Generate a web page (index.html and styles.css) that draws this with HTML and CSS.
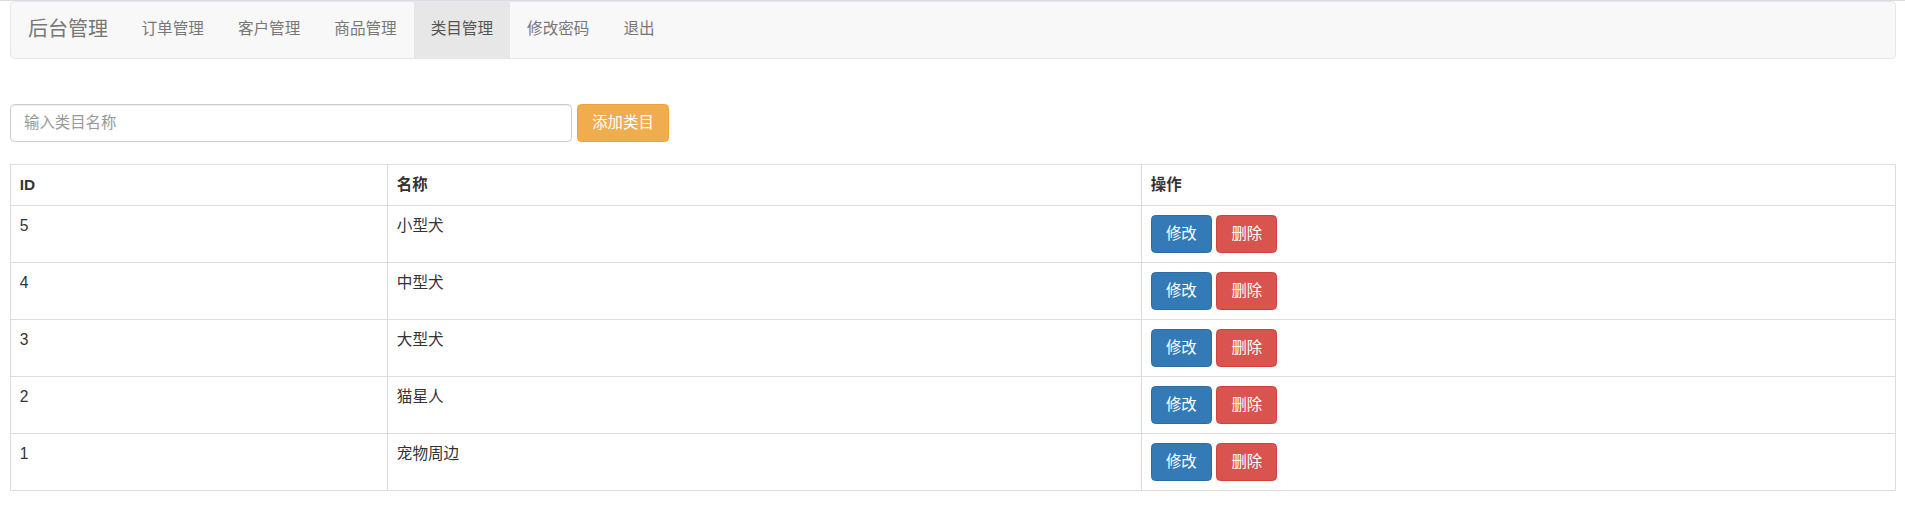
FILE: index.html
```html
<!DOCTYPE html>
<html lang="zh-CN">
<head>
<meta charset="utf-8">
<title>类目管理</title>
<link rel="stylesheet" href="styles.css">
</head>
<body>
<div class="page">
  <nav class="navbar">
    <a class="brand" href="#">后台管理</a>
    <ul class="nav">
      <li><a href="#">订单管理</a></li>
      <li><a href="#">客户管理</a></li>
      <li><a href="#">商品管理</a></li>
      <li class="active"><a href="#">类目管理</a></li>
      <li><a href="#">修改密码</a></li>
      <li><a href="#">退出</a></li>
    </ul>
  </nav>

  <form class="add-form">
    <input class="form-control" type="text" placeholder="输入类目名称">
    <button class="btn btn-warning" type="button">添加类目</button>
  </form>

  <table class="table">
    <thead>
      <tr><th class="c-id">ID</th><th class="c-name">名称</th><th class="c-op">操作</th></tr>
    </thead>
    <tbody>
      <tr><td>5</td><td>小型犬</td><td><div class="ops"><button class="btn btn-primary">修改</button><button class="btn btn-danger">删除</button></div></td></tr>
      <tr><td>4</td><td>中型犬</td><td><div class="ops"><button class="btn btn-primary">修改</button><button class="btn btn-danger">删除</button></div></td></tr>
      <tr><td>3</td><td>大型犬</td><td><div class="ops"><button class="btn btn-primary">修改</button><button class="btn btn-danger">删除</button></div></td></tr>
      <tr><td>2</td><td>猫星人</td><td><div class="ops"><button class="btn btn-primary">修改</button><button class="btn btn-danger">删除</button></div></td></tr>
      <tr><td>1</td><td>宠物周边</td><td><div class="ops"><button class="btn btn-primary">修改</button><button class="btn btn-danger">删除</button></div></td></tr>
    </tbody>
  </table>
</div>
</body>
</html>
```

FILE: styles.css
```css
* { box-sizing: border-box; }
html, body { margin: 0; padding: 0; background: #fff; }
body {
  font-family: "Liberation Sans", Arial, "Noto Sans CJK SC", sans-serif;
  font-size: 15.4px;
  line-height: 22px;
  color: #333;
  border-top: 1px solid #d9dce3;
}
.page { padding: 0 9px 0 10px; }

.navbar {
  display: flex;
  align-items: stretch;
  height: 58px;
  background: #f8f8f8;
  border: 1px solid #e7e7e7;
  border-radius: 4.4px;
  margin-bottom: 45px;
}
.brand {
  display: flex;
  align-items: center;
  padding: 0 16.5px 2px 17px;
  font-size: 20px;
  color: #777;
  text-decoration: none;
}
.nav {
  display: flex;
  list-style: none;
  margin: 0;
  padding: 0;
}
.nav li { display: flex; }
.nav a {
  display: flex;
  align-items: center;
  padding: 0 17px 2px;
  color: #777;
  text-decoration: none;
  font-size: 15.6px;
}
.nav .active a { background: #e7e7e7; color: #555; }

.add-form {
  display: flex;
  align-items: center;
  gap: 5px;
  margin: 0 0 22px;
}
.form-control {
  width: 562px;
  height: 38px;
  padding: 6px 13px;
  font-family: inherit;
  font-size: 15.4px;
  color: #555;
  border: 1px solid #ccc;
  border-radius: 4.4px;
  box-shadow: inset 0 1px 1px rgba(0,0,0,.075);
  outline: none;
}
.form-control::placeholder { color: #999; }

.btn {
  display: inline-block;
  height: 38px;
  padding: 0 13.2px;
  font-family: inherit;
  font-size: 15.4px;
  line-height: 22px;
  color: #fff;
  border: 1px solid transparent;
  border-radius: 4.4px;
  cursor: pointer;
}
.btn-warning { background: #f0ad4e; border-color: #eea236; width: 92px; }
.btn-primary { background: #337ab7; border-color: #2e6da4; width: 61px; padding: 0; }
.btn-danger { background: #d9534f; border-color: #d43f3a; width: 61px; padding: 0; }

.table {
  width: 100%;
  border-collapse: collapse;
  border: 1px solid #ddd;
}
.table th, .table td {
  border: 1px solid #ddd;
  padding: 8.8px;
  text-align: left;
  vertical-align: top;
}
.table th { font-weight: bold; height: 41px; }
.c-id { width: 20%; }
.c-name { width: 40%; }
.c-op { width: 40%; }
.table td { height: 57px; font-size: 15.6px; }
.ops { display: flex; gap: 4.5px; }
```
